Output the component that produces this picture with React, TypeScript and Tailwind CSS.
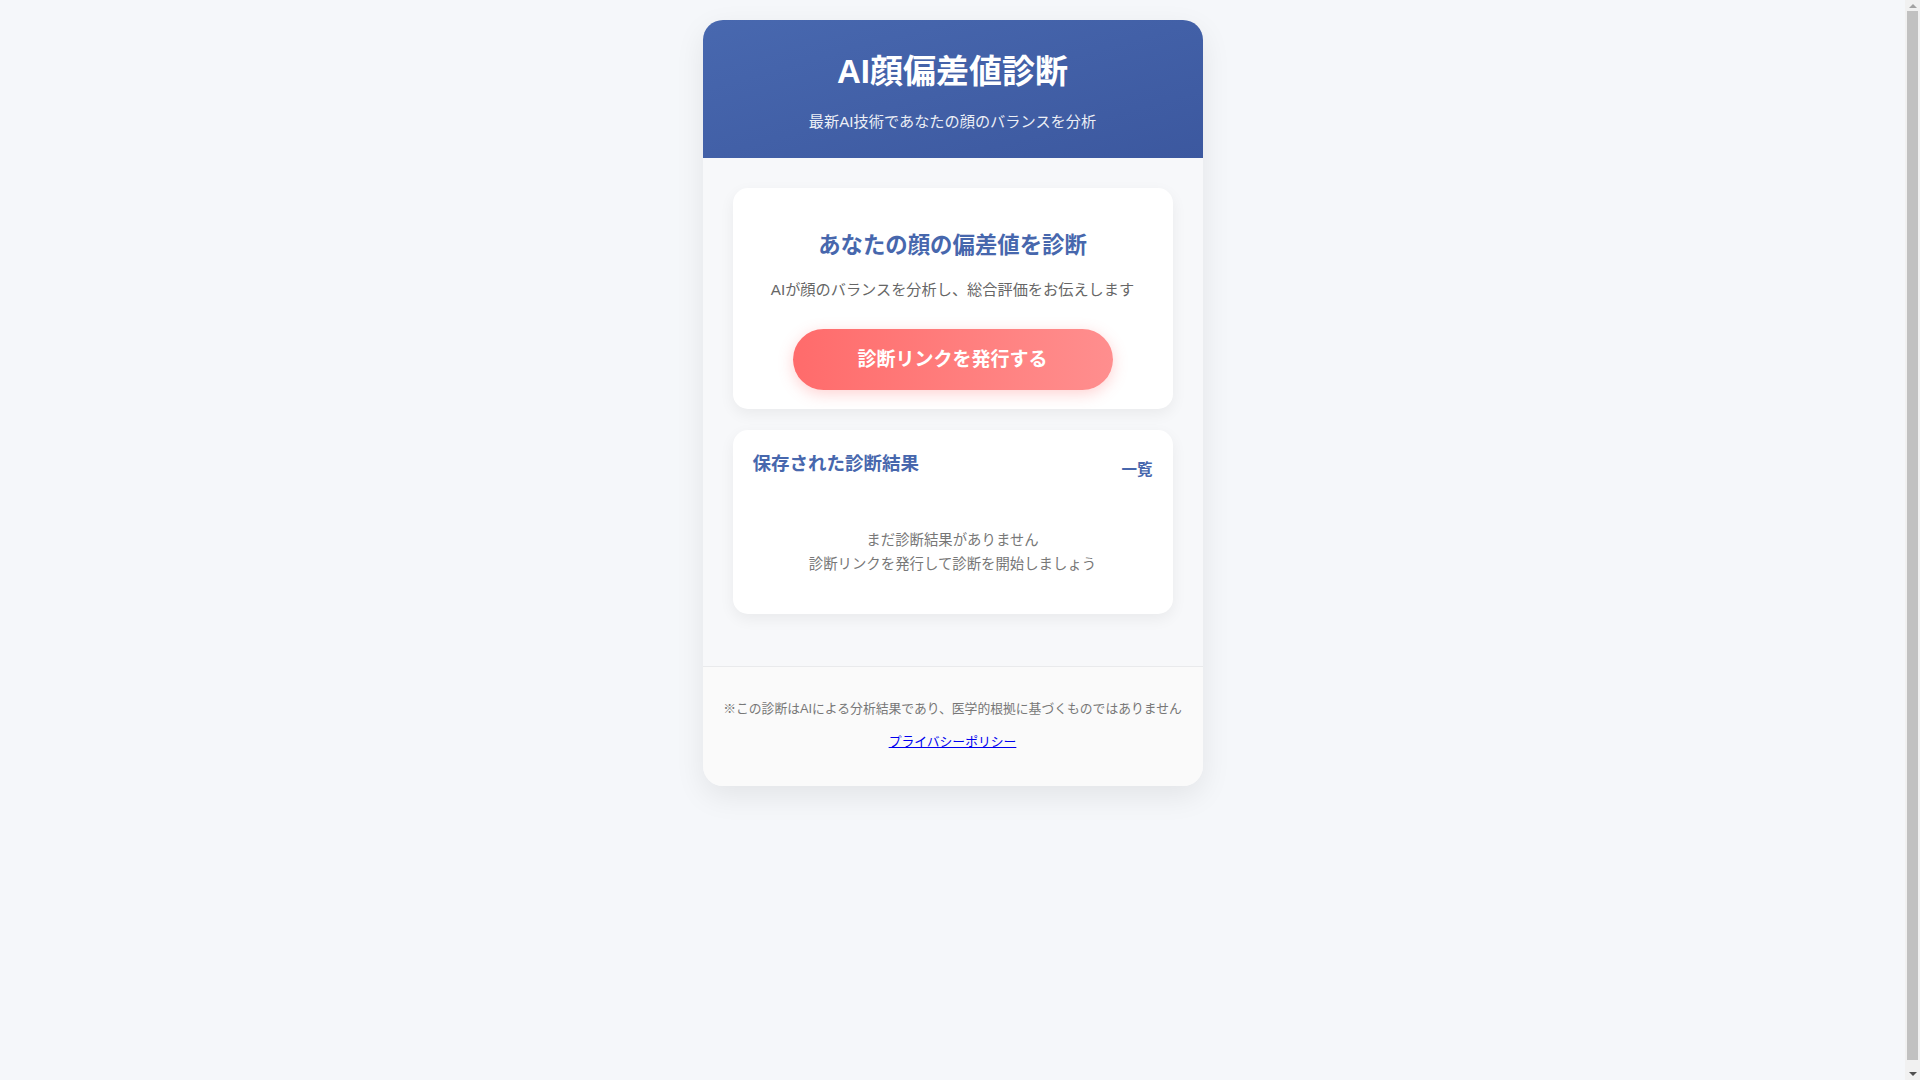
const font = "font-['Liberation_Sans','Noto_Sans_CJK_JP',sans-serif]";

function DiagnoseCard() {
  return (
    <section className="rounded-[15px] bg-white px-5 pb-[19px] pt-[41px] text-center shadow-[0_5px_15px_rgba(0,0,0,0.06)]">
      <h2 className="text-[22.4px] font-bold leading-[1.5] text-[#4767ad]">あなたの顔の偏差値を診断</h2>
      <p className="mt-4 text-[15.2px] leading-[1.5] text-[#666]">AIが顔のバランスを分析し、総合評価をお伝えします</p>
      <button className="mx-auto mt-7 flex h-[61px] w-[320px] items-center justify-center rounded-full bg-gradient-to-r from-[#ff6b6b] to-[#ff8e8e] text-[19px] font-bold text-white shadow-[0_4px_15px_rgba(255,107,107,0.3)]">
        診断リンクを発行する
      </button>
    </section>
  );
}

function SavedResults() {
  return (
    <section className="rounded-[15px] bg-white px-5 pb-[38px] pt-[20px] shadow-[0_5px_15px_rgba(0,0,0,0.06)]">
      <div className="flex items-start justify-between">
        <h3 className="text-[18.5px] font-bold leading-[1.5] text-[#4767ad]">保存された診断結果</h3>
        <button className="pt-[8px] text-[15.5px] font-bold leading-[1.5] text-[#4767ad]">一覧</button>
      </div>
      <div className="mt-[46px] text-center text-[14.4px] leading-[24px] text-[#777]">
        <p>まだ診断結果がありません</p>
        <p>診断リンクを発行して診断を開始しましょう</p>
      </div>
    </section>
  );
}

// browser scrollbar, as seen in the screenshot
function Scrollbar() {
  return (
    <div className="fixed right-0 top-0 flex h-screen w-[15px] flex-col items-center bg-[#f1f1f1]">
      <div className="mt-[4px] h-0 w-0 border-x-[4px] border-b-[4px] border-x-transparent border-b-[#a3a3a3]" />
      <div className="mt-[3px] w-[11px] flex-1 bg-[#c1c1c1]" />
      <div className="mb-[4px] mt-[12px] h-0 w-0 border-x-[4px] border-t-[4px] border-x-transparent border-t-[#505050]" />
    </div>
  );
}

export default function App() {
  return (
    <div className={`box-content min-h-screen bg-[#f5f7fa] py-5 pr-[15px] ${font}`}>
      <main className="mx-auto w-[500px] overflow-hidden rounded-[20px] bg-[#f7f8fa] shadow-[0_10px_30px_rgba(0,0,0,0.08)]">
        <header className="flex h-[138px] flex-col items-center bg-gradient-to-br from-[#4868af] to-[#3c589f] pt-[32px] text-white">
          <h1 className="text-[33px] font-bold leading-[1.2]">AI顔偏差値診断</h1>
          <p className="mt-[19px] text-[15.2px] leading-[1.5] opacity-90">最新AI技術であなたの顔のバランスを分析</p>
        </header>
        <div className="flex flex-col gap-[21px] px-[30px] pb-[52px] pt-[30px]">
          <DiagnoseCard />
          <SavedResults />
        </div>
        <footer className="border-t border-[#e9eaec] bg-[#fafafa] pb-[33px] pt-[32px] text-center">
          <p className="text-[12.8px] leading-[1.5] text-[#777]">※この診断はAIによる分析結果であり、医学的根拠に基づくものではありません</p>
          <a href="#" className="mt-[14px] inline-block text-[12.8px] leading-[1.5] text-[#0000ee] underline">プライバシーポリシー</a>
        </footer>
      </main>
      <Scrollbar />
    </div>
  );
}
